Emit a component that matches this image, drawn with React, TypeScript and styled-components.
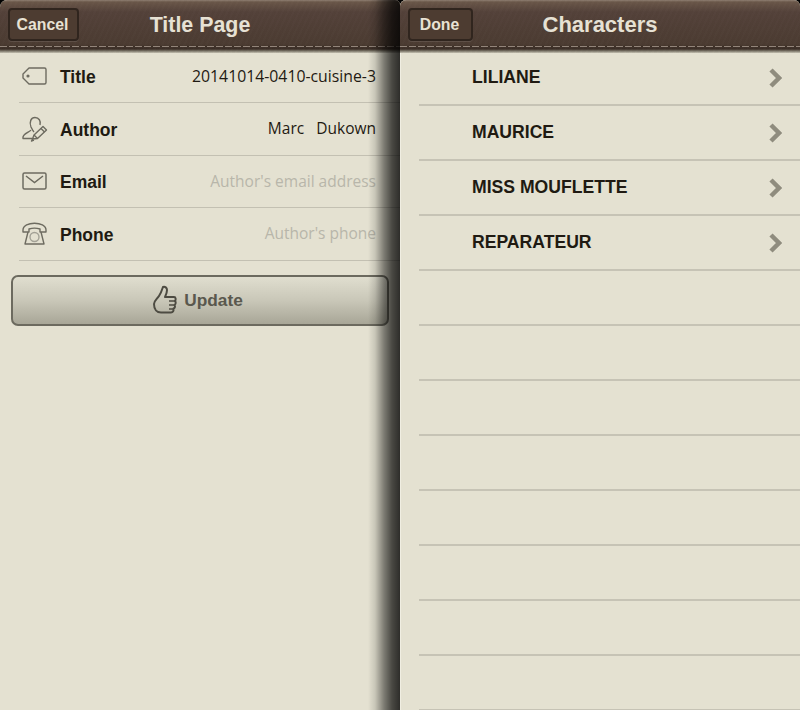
import React from 'react';
import styled, { createGlobalStyle } from 'styled-components';

const Global = createGlobalStyle`
  html, body { margin: 0; padding: 0; background: #000; }
  * { box-sizing: border-box; }
`;

const Screen = styled.div`
  width: 800px;
  height: 710px;
  display: flex;
  overflow: hidden;
  background: #000;
  font-family: "Liberation Sans", Arial, sans-serif;
`;

const LeftPane = styled.div`
  position: relative;
  width: 400px;
  flex: none;
  background: #e4e1d1;
  border-radius: 7px 5px 0 0;
  overflow: hidden;
`;

const RightPane = styled.div`
  width: 400px;
  flex: none;
  background: #e4e1d1;
  border-radius: 6px 6px 0 0;
  overflow: hidden;
  box-shadow: inset 1px 0 0 #f0eee2;
`;

const Shadow = styled.div`
  position: absolute;
  top: 0;
  right: 0;
  bottom: 0;
  width: 32px;
  pointer-events: none;
  background: linear-gradient(to right, rgba(0,0,0,0) 0%, rgba(0,0,0,.12) 22%, rgba(0,0,0,.45) 50%, rgba(0,0,0,.68) 75%, rgba(0,0,0,.8) 100%);
`;

const NavBar = styled.div`
  position: relative;
  height: 53px;
  display: flex;
  align-items: center;
  justify-content: center;
  background:
    repeating-linear-gradient(115deg, rgba(255,255,255,.008) 0 2px, rgba(0,0,0,.012) 2px 5px),
    linear-gradient(to bottom, #8f7e72 0, #6a5749 2px, #54423a 12px, #4c3c32 44px, #3b2e26 49px, #7b7668 51px, #c6c3b3 53px);
`;

const Stitch = styled.div`
  position: absolute;
  left: 0;
  right: 0;
  top: 46px;
  height: 1px;
  background: repeating-linear-gradient(to right, #93857a 0 7px, #3d3027 7px 9px);
`;

const NavButton = styled.div`
  position: absolute;
  left: 8px;
  top: 8px;
  height: 33px;
  display: flex;
  align-items: center;
  justify-content: center;
  width: ${p => p.$w}px;
  border-radius: 4px;
  border: 2px solid #30251e;
  background: #4d3c31;
  box-shadow: 0 1px 0 rgba(255,255,255,.1);
  color: #e8e2d4;
  font-size: 15.8px;
  font-weight: bold;
  padding-right: 2px;
`;

const NavTitle = styled.div`
  color: #e6e1d4;
  font-size: ${p => p.$size}px;
  font-weight: bold;
  margin-top: -3px;
`;

const Rows = styled.div`
  margin-top: -2.5px;
  padding-left: 19px;
`;

const FormRow = styled.div`
  height: 52.5px;
  display: flex;
  align-items: center;
  padding-right: 24px;
  border-bottom: 1px solid #c3c0b2;
`;

const IconSlot = styled.div`
  width: 41px;
  flex: none;
  display: flex;
  align-items: center;
  color: #6d6b60;
  padding-left: 3px;
`;

const Label = styled.div`
  font-size: 17.5px;
  font-weight: bold;
  color: #201a12;
  padding-top: 3px;
`;

const Value = styled.div`
  flex: 1;
  text-align: right;
  font-family: "Open Sans", sans-serif;
  font-size: ${p => p.$size || 15.5}px;
  color: ${p => (p.$placeholder ? '#b8b6aa' : '#1f1a12')};
  white-space: pre;
  padding-bottom: 1px;
`;

const UpdateArea = styled.div`
  padding: 14px 11px 0;
`;

const UpdateButton = styled.div`
  height: 51px;
  border-radius: 7px;
  border: 2px solid #6c6a5f;
  background: linear-gradient(to bottom, #e0decf 0%, #c9c7b8 50%, #a8a697 100%);
  display: flex;
  align-items: center;
  justify-content: center;
  gap: 6px;
  padding-right: 5px;
  color: #5a584e;
  font-size: 17.3px;
  font-weight: bold;
`;

const CharList = styled.div`
  margin-top: -2px;
`;

const CharRow = styled.div`
  height: 55px;
  margin-left: 19px;
  padding: 0 18px 0 53px;
  display: flex;
  align-items: center;
  justify-content: space-between;
  border-bottom: 2px solid #c6c3b5;
  font-size: 17.6px;
  font-weight: bold;
  color: #201a12;
`;

const Chevron = () => (
  <svg width="14" height="22" viewBox="0 0 14 22">
    <path d="M3 3l8 8-8 8" fill="none" stroke="#8f8c7e" strokeWidth="4.5" />
  </svg>
);

const TagIcon = () => (
  <svg width="25" height="20" viewBox="0 0 25 20" fill="none" stroke="currentColor" strokeWidth="1.4">
    <path d="M7 2h15.500a1.500 1.500 0 0 1 1.500 1.500v13a1.500 1.500 0 0 1-1.500 1.500H7l-6-6V8z" strokeLinejoin="round" />
    <circle cx="6" cy="10" r=".9" fill="currentColor" />
  </svg>
);

const AuthorIcon = () => (
  <svg width="26" height="26" viewBox="0 0 26 26" fill="none" stroke="currentColor" strokeWidth="1.4" strokeLinejoin="round">
    <path d="M12 16c-1-1-2-3-3-5C7 6 9 1.500 13 1.500s6 3.500 5 7.500" />
    <path d="M9 14c-1 2-7 3-8 7v1.500h9.500" />
    <path d="M10.500 23l1.500-4 9-8.500 3.500 3.500-9 8.500z" />
    <path d="M19 12.500l3.500 3.500M12 19l3.500 3.500" />
    <path d="M10.500 23l-1 2 2.500-.8" />
  </svg>
);

const MailIcon = () => (
  <svg width="25" height="18" viewBox="0 0 25 18" fill="none" stroke="currentColor" strokeWidth="1.5">
    <rect x="1" y="1" width="23" height="16" rx="1.5" />
    <path d="M4 4l8.500 6.500L21 4" />
  </svg>
);

const PhoneIcon = () => (
  <svg width="25" height="24" viewBox="0 0 25 24" fill="none" stroke="currentColor" strokeWidth="1.4">
    <path d="M1 8c0-9 23-9 23 0v2h-6V7c-3-1-8-1-11 0v3H1z" strokeLinejoin="round" />
    <path d="M6 10L3 22h19l-3-12" strokeLinejoin="round" />
    <circle cx="12.500" cy="15" r="4.500" stroke="#a3a196" />
  </svg>
);

const ThumbIcon = () => (
  <svg width="26" height="33" viewBox="0 0 26 33" fill="none" stroke="#4d4b42" strokeWidth="2" strokeLinejoin="round">
    <path d="M2 20c0-3 3-5 5-8 2-3 3-6 4-9 2-1 4 1 4 3 0 3-1 5-2 7h9c2 0 2 3 1 4 1 1 1 3-.5 4 1 1 .5 3-1 3.500.5 2-.5 4-2.500 4H9c-4 0-7-3-7-8.500z" />
    <path d="M17 17h6M17 21h5M17 25h4" strokeWidth="1.500" />
  </svg>
);

const formRows = [
  { icon: <TagIcon />, label: 'Title', value: '20141014-0410-cuisine-3', size: 15.8 },
  { icon: <AuthorIcon />, label: 'Author', value: 'Marc   Dukown' },
  { icon: <MailIcon />, label: 'Email', value: "Author's email address", placeholder: true },
  { icon: <PhoneIcon />, label: 'Phone', value: "Author's phone", placeholder: true },
];

const characters = ['LILIANE', 'MAURICE', 'MISS MOUFLETTE', 'REPARATEUR', '', '', '', '', '', '', '', ''];

export default function App() {
  return (
    <Screen>
      <Global />
      <LeftPane>
        <NavBar>
          <NavButton $w={71}>Cancel</NavButton>
          <NavTitle $size={21.4}>Title Page</NavTitle>
          <Stitch />
        </NavBar>
        <Rows>
          {formRows.map(r => (
            <FormRow key={r.label}>
              <IconSlot>{r.icon}</IconSlot>
              <Label>{r.label}</Label>
              <Value $placeholder={r.placeholder} $size={r.size}>{r.value}</Value>
            </FormRow>
          ))}
        </Rows>
        <UpdateArea>
          <UpdateButton>
            <ThumbIcon />
            Update
          </UpdateButton>
        </UpdateArea>
        <Shadow />
      </LeftPane>
      <RightPane>
        <NavBar>
          <NavButton $w={65}>Done</NavButton>
          <NavTitle $size={22}>Characters</NavTitle>
          <Stitch />
        </NavBar>
        <CharList>
          {characters.map((c, i) => (
            <CharRow key={i}>
              {c}
              {c && <Chevron />}
            </CharRow>
          ))}
        </CharList>
      </RightPane>
    </Screen>
  );
}
